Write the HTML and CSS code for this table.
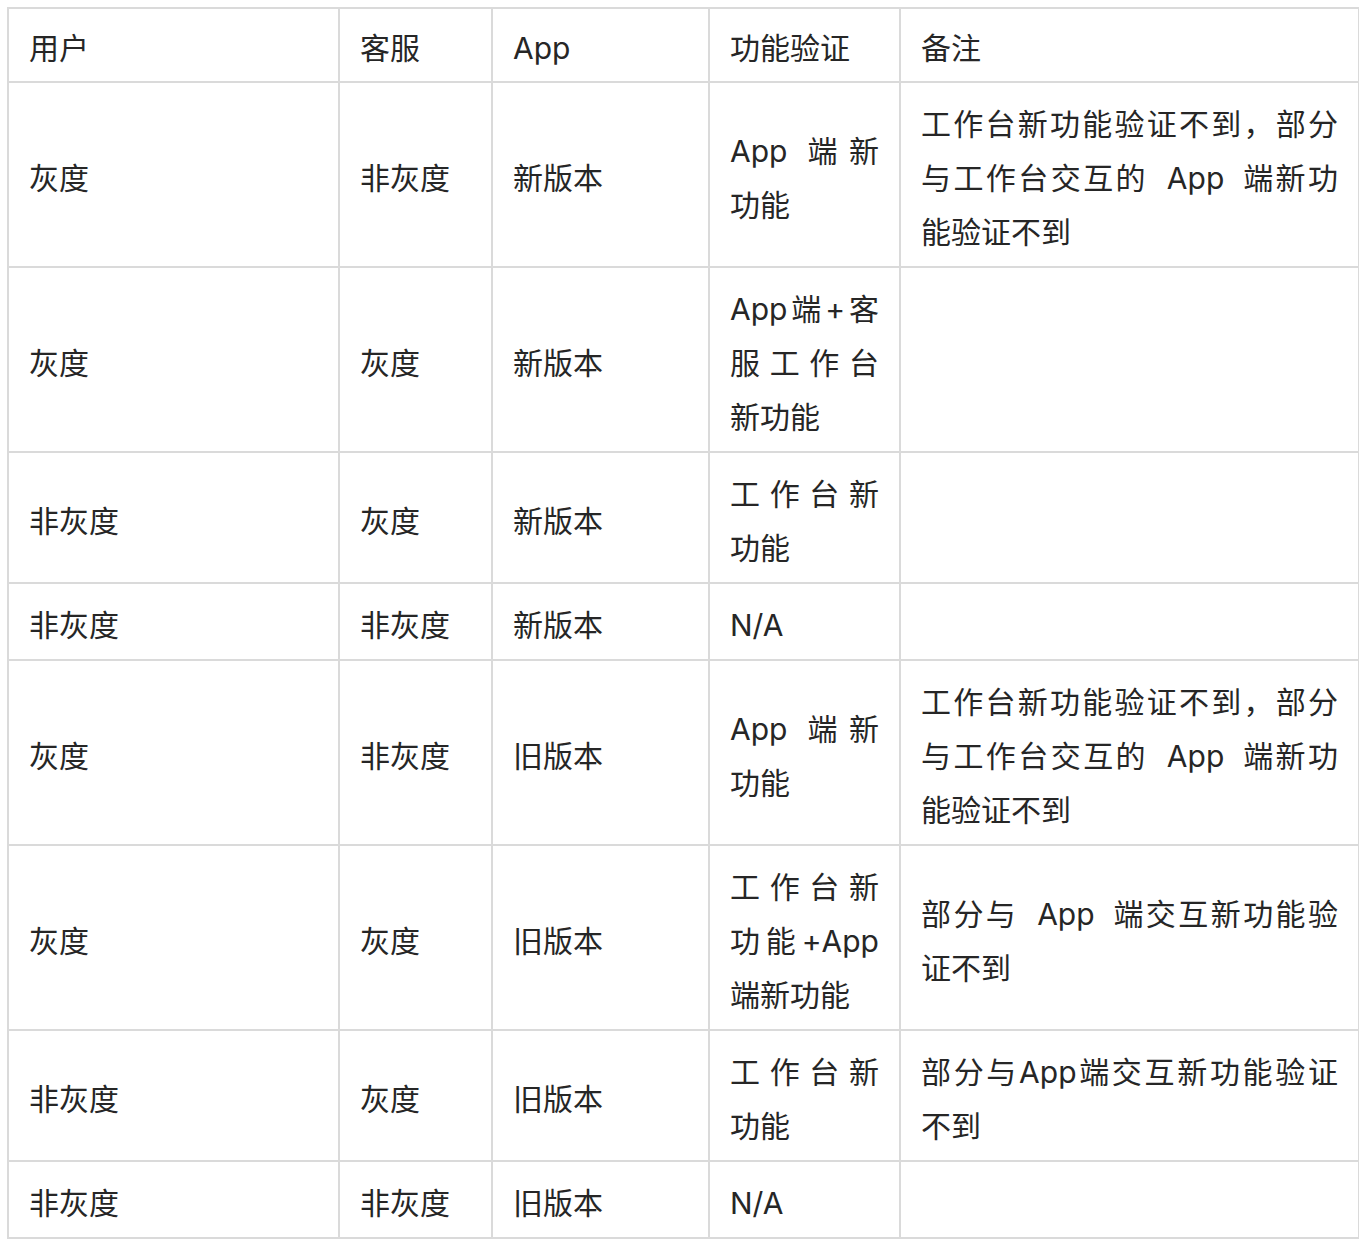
FILE: index.html
```html
<!DOCTYPE html>
<html lang="zh-CN">
<head>
<meta charset="utf-8">
<title>灰度验证矩阵</title>
<link rel="stylesheet" href="styles.css">
</head>
<body>
<table class="matrix">
  <colgroup>
    <col class="c-user">
    <col class="c-cs">
    <col class="c-app">
    <col class="c-func">
    <col class="c-note">
  </colgroup>
  <thead>
    <tr><th>用户</th><th>客服</th><th>App</th><th>功能验证</th><th>备注</th></tr>
  </thead>
  <tbody>
    <tr><td>灰度</td><td>非灰度</td><td>新版本</td><td>App 端新功能</td><td class="note">工作台新功能验证不到，部分与工作台交互的 App 端新功能验证不到</td></tr>
    <tr><td>灰度</td><td>灰度</td><td>新版本</td><td>App端+客服工作台新功能</td><td class="note"></td></tr>
    <tr><td>非灰度</td><td>灰度</td><td>新版本</td><td>工作台新功能</td><td class="note"></td></tr>
    <tr><td>非灰度</td><td>非灰度</td><td>新版本</td><td>N/A</td><td class="note"></td></tr>
    <tr><td>灰度</td><td>非灰度</td><td>旧版本</td><td>App 端新功能</td><td class="note">工作台新功能验证不到，部分与工作台交互的 App 端新功能验证不到</td></tr>
    <tr><td>灰度</td><td>灰度</td><td>旧版本</td><td>工作台新功能+App端新功能</td><td class="note">部分与 App 端交互新功能验证不到</td></tr>
    <tr><td>非灰度</td><td>灰度</td><td>旧版本</td><td>工作台新功能</td><td class="note">部分与App端交互新功能验证不到</td></tr>
    <tr><td>非灰度</td><td>非灰度</td><td>旧版本</td><td>N/A</td><td class="note"></td></tr>
  </tbody>
</table>
</body>
</html>
```

FILE: styles.css
```css
html, body {
  background: #ffffff;
}

body {
  margin: 7px;
  font-family: Inter, "Noto Sans CJK SC", sans-serif;
  font-size: 30px;
  line-height: 54px;
  color: #262626;
}

.matrix {
  border-collapse: collapse;
  table-layout: fixed;
  width: 1353px;
}

.c-user { width: 331px; }
.c-cs { width: 153px; }
.c-app { width: 217px; }
.c-func { width: 191px; }
.c-note { width: 459px; }

.matrix th,
.matrix td {
  border: 2px solid #dadada;
  padding: 13.5px 20px 7.5px;
  text-align: justify;
  vertical-align: middle;
  font-weight: 400;
  word-break: normal;
}

.matrix th {
  padding-top: 12px;
  padding-bottom: 6px;
}

.matrix .note {
  word-spacing: 8px;
}
```
